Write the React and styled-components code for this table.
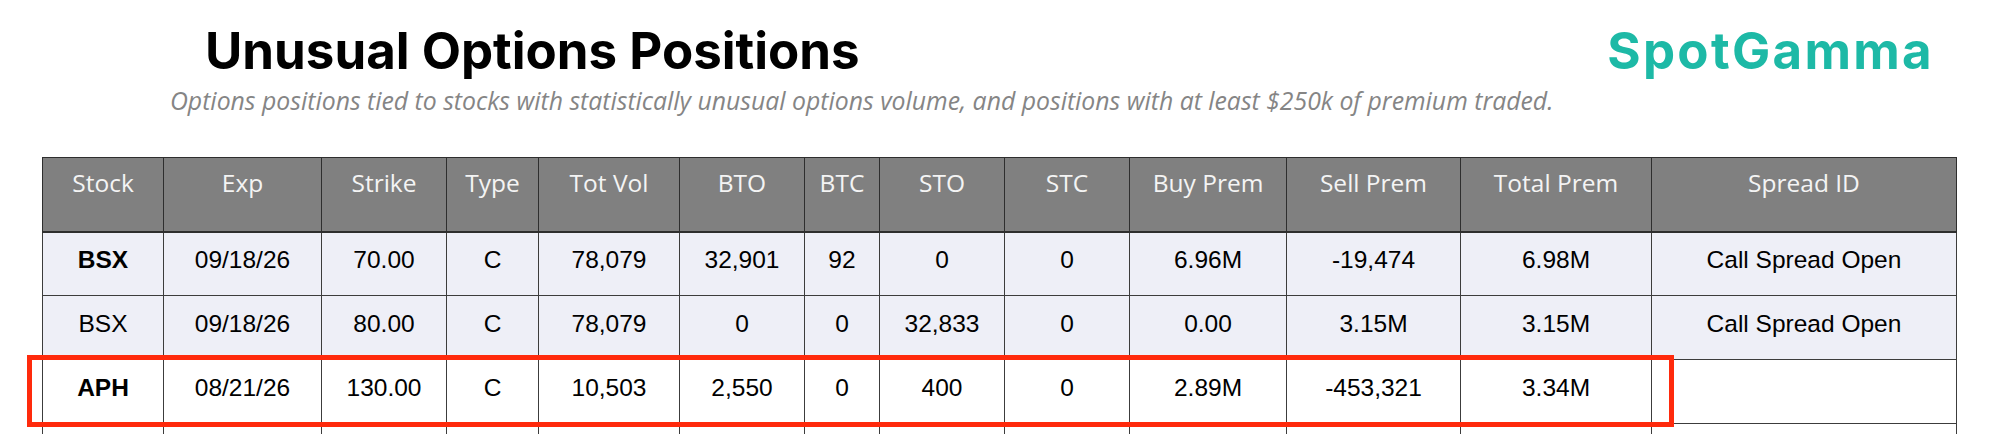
import React from "react";
import styled, { createGlobalStyle } from "styled-components";

const Global = createGlobalStyle`
  html, body { margin: 0; padding: 0; background: #fff; overflow: hidden; }
  body { width: 2004px; height: 434px; }
`;

const Page = styled.div`
  width: 2004px;
  height: 434px;
  overflow: hidden;
  display: flex;
  flex-direction: column;
`;

const Header = styled.header`
  flex: 0 0 157px;
  display: flex;
  align-items: flex-start;
  padding-left: 170px;
  box-sizing: border-box;
`;

const TitleBlock = styled.div`
  display: flex;
  flex-direction: column;
`;

const Title = styled.h1`
  margin: 25px 0 0 35px;
  font-family: Inter, "Noto Sans", sans-serif;
  font-weight: 700;
  font-size: 51px;
  line-height: 51px;
  color: #000;
`;

const Subtitle = styled.p`
  margin: 12px 0 0 0;
  font-family: "Open Sans", sans-serif;
  font-style: italic;
  font-size: 24.8px;
  line-height: 25px;
  color: #858585;
  white-space: nowrap;
`;

const Logo = styled.div`
  margin: 25px 70px 0 auto;
  font-family: Inter, "Noto Sans", sans-serif;
  font-weight: 700;
  font-size: 51px;
  line-height: 51px;
  letter-spacing: 2.3px;
  color: #1db9a6;
`;

const TableWrap = styled.div`
  position: relative;
  flex: 0 0 auto;
  margin-left: 42px;
  width: 1914px;
`;

const Table = styled.table`
  border-collapse: collapse;
  table-layout: fixed;
  width: 1914px;
`;

const Th = styled.th`
  height: 74px;
  padding: 8px 0 0 0;
  vertical-align: top;
  background: #808080;
  color: #f4f4f4;
  font-family: "Open Sans", sans-serif;
  font-weight: 400;
  font-size: 24.5px;
  line-height: 34px;
  text-align: center;
  border: 1px solid #2e2e2e;
  border-bottom-width: 2px;
  box-sizing: border-box;
`;

const Tr = styled.tr`
  background: ${(p) => (p.$shade ? "#eeeff7" : "#ffffff")};
`;

const Td = styled.td`
  height: 64px;
  padding: 0 0 8px 0;
  vertical-align: middle;
  text-align: center;
  font-family: "Liberation Sans", Arial, sans-serif;
  font-size: 24.5px;
  font-weight: ${(p) => (p.$bold ? 700 : 400)};
  color: #000;
  border: 1px solid #3c3c3c;
  box-sizing: border-box;
`;

const Highlight = styled.div`
  position: absolute;
  left: -15px;
  top: 198px;
  width: 1647px;
  height: 72px;
  border: 5px solid #ff2a0c;
  box-sizing: border-box;
  pointer-events: none;
`;

const cols = [121, 158, 125, 92, 141, 125, 75, 125, 125, 157, 174, 191, 305];
const heads = ["Stock", "Exp", "Strike", "Type", "Tot Vol", "BTO", "BTC", "STO", "STC", "Buy Prem", "Sell Prem", "Total Prem", "Spread ID"];
const rows = [
  { shade: true, bold: true, cells: ["BSX", "09/18/26", "70.00", "C", "78,079", "32,901", "92", "0", "0", "6.96M", "-19,474", "6.98M", "Call Spread Open"] },
  { shade: true, bold: false, cells: ["BSX", "09/18/26", "80.00", "C", "78,079", "0", "0", "32,833", "0", "0.00", "3.15M", "3.15M", "Call Spread Open"] },
  { shade: false, bold: true, cells: ["APH", "08/21/26", "130.00", "C", "10,503", "2,550", "0", "400", "0", "2.89M", "-453,321", "3.34M", ""] },
  { shade: false, bold: false, cells: ["", "", "", "", "", "", "", "", "", "", "", "", ""] },
];

export default function App() {
  return (
    <Page>
      <Global />
      <Header>
        <TitleBlock>
          <Title>Unusual Options Positions</Title>
          <Subtitle>
            Options positions tied to stocks with statistically unusual options volume, and positions with at least $250k of premium traded.
          </Subtitle>
        </TitleBlock>
        <Logo>SpotGamma</Logo>
      </Header>
      <TableWrap>
        <Table>
          <colgroup>
            {cols.map((w, i) => (
              <col key={i} style={{ width: w }} />
            ))}
          </colgroup>
          <thead>
            <tr>
              {heads.map((h) => (
                <Th key={h}>{h}</Th>
              ))}
            </tr>
          </thead>
          <tbody>
            {rows.map((r, i) => (
              <Tr key={i} $shade={r.shade}>
                {r.cells.map((c, j) => (
                  <Td key={j} $bold={j === 0 && r.bold}>{c}</Td>
                ))}
              </Tr>
            ))}
          </tbody>
        </Table>
        <Highlight />
      </TableWrap>
    </Page>
  );
}
